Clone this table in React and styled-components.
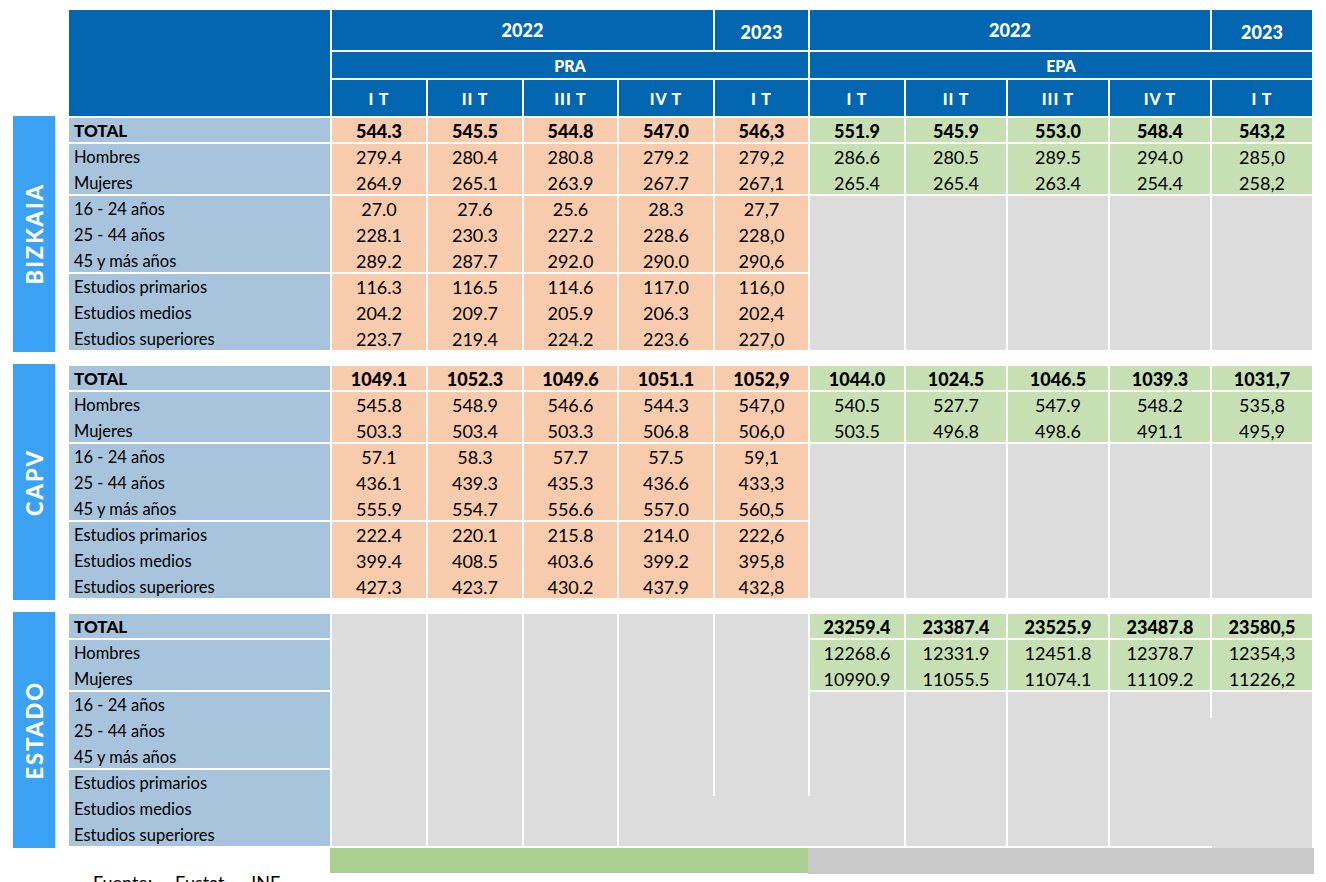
import React from "react";
import styled, { createGlobalStyle } from "styled-components";

const C = {
	head: "#0366b0",
	label: "#a7c4dc",
	pra: "#f8cbad",
	epa: "#c6e0b4",
	empty: "#dcdcdc",
	side: "#3aa1f3",
	barGreen: "#a9d08e",
	barGray: "#c9c9c9",
};

const COLS = "261px 94px 94px 93px 94px 93px 94px 100px 100px 100px 100px";

const GlobalStyle = createGlobalStyle`
	body {
		margin: 0;
		background: #fff;
		font-family: Lato, "Open Sans", "Liberation Sans", sans-serif;
		color: #000;
	}
`;

const Page = styled.div`
	display: flex;
	flex-direction: column;
	padding: 10px 0 0 13px;
`;

const Band = styled.div`
	display: flex;
	align-items: flex-start;
	gap: 13px;
	margin-bottom: ${(p) => p.$after}px;
`;

const SideSpacer = styled.div`
	width: 43px;
	flex: none;
`;

const SideLabel = styled.div`
	width: 43px;
	height: 236px;
	margin-top: -2px;
	flex: none;
	background: ${C.side};
	box-shadow: inset -1px 0 0 #cfe5fb;
	display: flex;
	align-items: center;
	justify-content: center;

	span {
		writing-mode: vertical-rl;
		transform: rotate(180deg);
		color: #fff;
		font-weight: 900;
		font-size: 22px;
		letter-spacing: 2px;
		line-height: 1;
	}
`;

const HeaderGrid = styled.div`
	display: grid;
	grid-template-columns: ${COLS};
	grid-template-rows: 40px 26px 36px;
	gap: 2px;
`;

const HeadCell = styled.div`
	grid-column: ${(p) => p.$col};
	grid-row: ${(p) => p.$row};
	background: ${C.head};
	color: #fff;
	display: flex;
	align-items: center;
	justify-content: center;
	font-weight: 900;
	font-size: ${(p) => p.$size || 15}px;
	letter-spacing: ${(p) => p.$spacing || 0}px;
	padding-top: ${(p) => p.$drop || 0}px;
	box-sizing: border-box;
`;

const BodyGrid = styled.div`
	display: grid;
	grid-template-columns: ${COLS};
	grid-template-rows: 26px 52px 78px 78px;
	column-gap: 2px;
`;

const Cell = styled.div`
	grid-column: ${(p) => p.$col};
	grid-row: ${(p) => p.$row};
	background: ${(p) => p.$bg};
	box-shadow: inset 0 -2px 0 #fff;
	display: flex;
	flex-direction: column;
	text-align: ${(p) => (p.$left ? "left" : "center")};
	padding-left: ${(p) => (p.$left ? 5 : 0)}px;
`;

const EmptyCell = styled.div`
	position: relative;
	grid-column: ${(p) => p.$col};
	grid-row: ${(p) => p.$row};
	background: ${C.empty};
	box-shadow: ${(p) => (p.$noLine ? "none" : "inset 0 -2px 0 #fff")};

	${(p) =>
		p.$bridge != null &&
		`
		&::after {
			content: "";
			position: absolute;
			top: ${p.$bridge}px;
			bottom: 2px;
			right: -2px;
			width: 2px;
			background: ${C.empty};
		}
	`}
`;

const Line = styled.div`
	height: 26px;
	line-height: 26px;
	font-size: ${(p) => (p.$label ? (p.$bold ? 17 : 16.5) : 18)}px;
	font-weight: ${(p) => (p.$bold ? 900 : 400)};
	white-space: nowrap;
`;

const Bars = styled.div`
	display: flex;
	align-items: flex-start;
	margin-left: 317px;
`;

const Bar = styled.div`
	width: ${(p) => p.$w}px;
	height: ${(p) => p.$h}px;
	background: ${(p) => p.$bg};
`;

const Source = styled.div`
	margin-left: 80px;
	font-size: 18px;
	line-height: 16px;
	word-spacing: 18px;
`;

const GROUPS = [
	["TOTAL"],
	["Hombres", "Mujeres"],
	["16 - 24 años", "25 - 44 años", "45 y más años"],
	["Estudios primarios", "Estudios medios", "Estudios superiores"],
];
const OFFSETS = [0, 1, 3, 6];
const QUARTERS = ["I T", "II T", "III T", "IV T", "I T"];

const SECTIONS = [
	{
		name: "BIZKAIA",
		pra: [
			["544.3", "545.5", "544.8", "547.0", "546,3"],
			["279.4", "280.4", "280.8", "279.2", "279,2"],
			["264.9", "265.1", "263.9", "267.7", "267,1"],
			["27.0", "27.6", "25.6", "28.3", "27,7"],
			["228.1", "230.3", "227.2", "228.6", "228,0"],
			["289.2", "287.7", "292.0", "290.0", "290,6"],
			["116.3", "116.5", "114.6", "117.0", "116,0"],
			["204.2", "209.7", "205.9", "206.3", "202,4"],
			["223.7", "219.4", "224.2", "223.6", "227,0"],
		],
		epa: [
			["551.9", "545.9", "553.0", "548.4", "543,2"],
			["286.6", "280.5", "289.5", "294.0", "285,0"],
			["265.4", "265.4", "263.4", "254.4", "258,2"],
		],
	},
	{
		name: "CAPV",
		pra: [
			["1049.1", "1052.3", "1049.6", "1051.1", "1052,9"],
			["545.8", "548.9", "546.6", "544.3", "547,0"],
			["503.3", "503.4", "503.3", "506.8", "506,0"],
			["57.1", "58.3", "57.7", "57.5", "59,1"],
			["436.1", "439.3", "435.3", "436.6", "433,3"],
			["555.9", "554.7", "556.6", "557.0", "560,5"],
			["222.4", "220.1", "215.8", "214.0", "222,6"],
			["399.4", "408.5", "403.6", "399.2", "395,8"],
			["427.3", "423.7", "430.2", "437.9", "432,8"],
		],
		epa: [
			["1044.0", "1024.5", "1046.5", "1039.3", "1031,7"],
			["540.5", "527.7", "547.9", "548.2", "535,8"],
			["503.5", "496.8", "498.6", "491.1", "495,9"],
		],
	},
	{
		name: "ESTADO",
		pra: null,
		epa: [
			["23259.4", "23387.4", "23525.9", "23487.8", "23580,5"],
			["12268.6", "12331.9", "12451.8", "12378.7", "12354,3"],
			["10990.9", "11055.5", "11074.1", "11109.2", "11226,2"],
		],
	},
];

function TableHeader() {
	return (
		<HeaderGrid>
			<HeadCell $col="1" $row="1 / span 3" />
			<HeadCell $col="2 / span 4" $row="1" $size={18}>2022</HeadCell>
			<HeadCell $col="6" $row="1" $size={18} $drop={3}>2023</HeadCell>
			<HeadCell $col="7 / span 4" $row="1" $size={18}>2022</HeadCell>
			<HeadCell $col="11" $row="1" $size={18} $drop={3}>2023</HeadCell>
			<HeadCell $col="2 / span 5" $row="2" $size={16}>PRA</HeadCell>
			<HeadCell $col="7 / span 5" $row="2" $size={16}>EPA</HeadCell>
			{[...QUARTERS, ...QUARTERS].map((q, i) => (
				<HeadCell key={i} $col={String(i + 2)} $row="3" $size={16} $spacing={1}>
					{q}
				</HeadCell>
			))}
		</HeaderGrid>
	);
}

function ValueCells({ values, col, bg }) {
	return GROUPS.map((labels, g) => (
		<Cell key={`${col}-${g}`} $bg={bg} $col={String(col)} $row={String(g + 1)}>
			{labels.map((_, i) => (
				<Line key={i} $bold={g === 0}>
					{values[OFFSETS[g] + i]}
				</Line>
			))}
		</Cell>
	));
}

function SectionBody({ pra, epa, last }) {
	const cells = [];

	GROUPS.forEach((labels, g) => {
		cells.push(
			<Cell key={`label-${g}`} $bg={C.label} $col="1" $row={String(g + 1)} $left>
				{labels.map((l) => (
					<Line key={l} $label $bold={g === 0}>
						{l}
					</Line>
				))}
			</Cell>
		);
	});

	for (let c = 0; c < 5; c++) {
		if (pra) {
			cells.push(
				<ValueCells key={`pra-${c}`} values={pra.map((r) => r[c])} col={c + 2} bg={C.pra} />
			);
		} else {
			cells.push(
				<EmptyCell
					key={`pra-${c}`}
					$col={String(c + 2)}
					$row="1 / span 4"
					$bridge={c >= 3 ? 182 : null}
				/>
			);
		}
	}

	for (let c = 0; c < 5; c++) {
		const col = c + 7;
		[0, 1].forEach((g) => {
			cells.push(
				<Cell key={`epa-${c}-${g}`} $bg={C.epa} $col={String(col)} $row={String(g + 1)}>
					{GROUPS[g].map((_, i) => (
						<Line key={i} $bold={g === 0}>
							{epa[OFFSETS[g] + i][c]}
						</Line>
					))}
				</Cell>
			);
		});
		cells.push(
			<EmptyCell
				key={`epa-empty-${c}`}
				$col={String(col)}
				$row="3 / span 2"
				$bridge={last && c === 3 ? 26 : null}
				$noLine={last && c === 4}
			/>
		);
	}

	return <BodyGrid>{cells}</BodyGrid>;
}

export default function App() {
	return (
		<>
			<GlobalStyle />
			<Page>
				<Band $after={2}>
					<SideSpacer />
					<TableHeader />
				</Band>
				{SECTIONS.map((s, i) => (
					<Band key={s.name} $after={i === SECTIONS.length - 1 ? 0 : 14}>
						<SideLabel>
							<span>{s.name}</span>
						</SideLabel>
						<SectionBody pra={s.pra} epa={s.epa} last={i === SECTIONS.length - 1} />
					</Band>
				))}
				<Bars>
					<Bar $w={478} $h={25} $bg={C.barGreen} />
					<Bar $w={506} $h={26} $bg={C.barGray} />
				</Bars>
				<Source>Fuente: Eustat, INE</Source>
			</Page>
		</>
	);
}
